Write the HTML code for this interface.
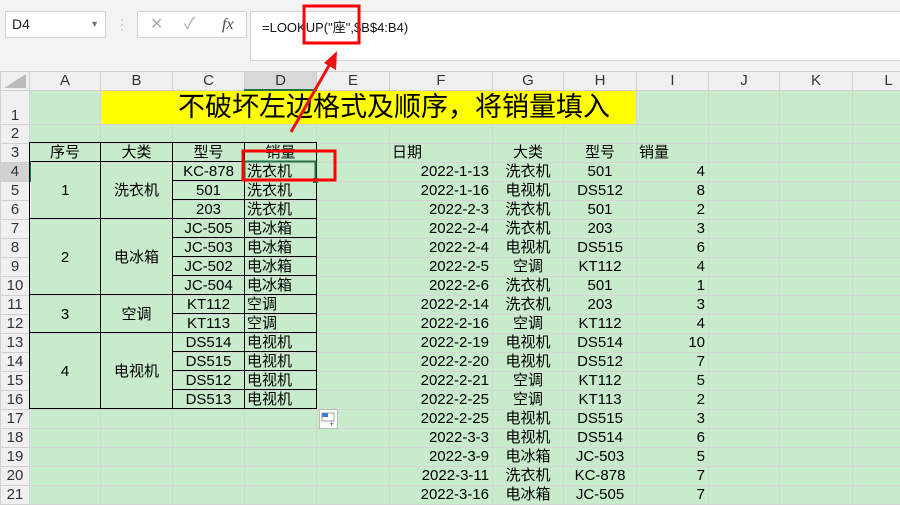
<!DOCTYPE html>
<html><head><meta charset="utf-8"><style>
*{margin:0;padding:0;box-sizing:border-box}
body{width:900px;height:496px;overflow:hidden;background:#f3f3f3;font-family:"Liberation Sans","Noto Sans CJK SC",sans-serif;position:relative;color:#000}
.abs{position:absolute}
table{position:absolute;left:0;top:71px;width:924px;border-collapse:collapse;table-layout:fixed;font-size:15px}
td{border:1px solid #d4d4d4;background:#c8ebcb;height:19px;padding:0 2px;white-space:nowrap;overflow:hidden;line-height:17px}
tr.h td{background:#f0f0f0;text-align:center;color:#333;height:18px;border-color:#d0d0d0}
td.r{background:#f0f0f0;text-align:center;color:#333;border-color:#d0d0d0;padding:0}
.c{text-align:center}.rt{text-align:right;padding-right:3px}
</style></head><body>
<div class="abs" style="left:5px;top:11px;width:101px;height:27px;background:#fff;border:1px solid #d4d4d4;font-size:14px;line-height:25px;padding-left:6px;color:#222">D4<span style="position:absolute;right:6px;top:0;font-size:9px;color:#777">▼</span></div>
<div class="abs" style="left:120px;top:17px;color:#aaa;font-size:12px;line-height:5px">·<br>·<br>·</div>
<div class="abs" style="left:137px;top:11px;width:110px;height:27px;background:#fff;border:1px solid #d4d4d4;color:#aaa;font-size:16px;line-height:25px">
<span class="abs" style="left:12px">✕</span><span class="abs" style="left:46px">✓</span><span class="abs" style="left:84px;color:#444;font-style:italic;font-family:'Liberation Serif',serif">fx</span></div>
<div class="abs" style="left:250px;top:11px;width:660px;height:50px;background:#fff;border:1px solid #d4d4d4;font-size:13px;padding:5px 0 0 11px;color:#111">=LOOKUP("座",$B$4:B4)</div>
<table>
<colgroup><col style="width:29px"><col style="width:71px"><col style="width:72px"><col style="width:72px"><col style="width:72px"><col style="width:73px"><col style="width:103px"><col style="width:71px"><col style="width:73px"><col style="width:72px"><col style="width:71px"><col style="width:73px"><col style="width:72px"></colgroup>
<tr class="h"><td></td><td>A</td><td>B</td><td>C</td><td style="background:#d8d8d8;border-bottom:2px solid #217346">D</td><td>E</td><td>F</td><td>G</td><td>H</td><td>I</td><td>J</td><td>K</td><td>L</td></tr>
<tr style="height:34px"><td class="r" style="vertical-align:bottom">1</td><td></td><td colspan="7" style="background:#ffff00;padding-left:77px;font-size:27px;line-height:32px;height:34px">不破坏左边格式及顺序，将销量填入</td><td></td><td></td><td></td><td></td></tr>
<tr><td class="r">2</td><td></td><td></td><td></td><td></td><td></td><td></td><td></td><td></td><td></td><td></td><td></td><td></td></tr>
<tr><td class="r">3</td><td class="c">序号</td><td class="c">大类</td><td class="c">型号</td><td class="c">销量</td><td></td><td>日期</td><td class="c">大类</td><td class="c">型号</td><td>销量</td><td></td><td></td><td></td></tr>
<tr><td class="r" style="background:#d2d2d2;border-right:2px solid #217346">4</td><td rowspan="3" class="c">1</td><td rowspan="3" class="c">洗衣机</td><td class="c">KC-878</td><td>洗衣机</td><td></td><td class="rt">2022-1-13</td><td class="c">洗衣机</td><td class="c">501</td><td class="rt">4</td><td></td><td></td><td></td></tr>
<tr><td class="r">5</td><td class="c">501</td><td>洗衣机</td><td></td><td class="rt">2022-1-16</td><td class="c">电视机</td><td class="c">DS512</td><td class="rt">8</td><td></td><td></td><td></td></tr>
<tr><td class="r">6</td><td class="c">203</td><td>洗衣机</td><td></td><td class="rt">2022-2-3</td><td class="c">洗衣机</td><td class="c">501</td><td class="rt">2</td><td></td><td></td><td></td></tr>
<tr><td class="r">7</td><td rowspan="4" class="c">2</td><td rowspan="4" class="c">电冰箱</td><td class="c">JC-505</td><td>电冰箱</td><td></td><td class="rt">2022-2-4</td><td class="c">洗衣机</td><td class="c">203</td><td class="rt">3</td><td></td><td></td><td></td></tr>
<tr><td class="r">8</td><td class="c">JC-503</td><td>电冰箱</td><td></td><td class="rt">2022-2-4</td><td class="c">电视机</td><td class="c">DS515</td><td class="rt">6</td><td></td><td></td><td></td></tr>
<tr><td class="r">9</td><td class="c">JC-502</td><td>电冰箱</td><td></td><td class="rt">2022-2-5</td><td class="c">空调</td><td class="c">KT112</td><td class="rt">4</td><td></td><td></td><td></td></tr>
<tr><td class="r">10</td><td class="c">JC-504</td><td>电冰箱</td><td></td><td class="rt">2022-2-6</td><td class="c">洗衣机</td><td class="c">501</td><td class="rt">1</td><td></td><td></td><td></td></tr>
<tr><td class="r">11</td><td rowspan="2" class="c">3</td><td rowspan="2" class="c">空调</td><td class="c">KT112</td><td>空调</td><td></td><td class="rt">2022-2-14</td><td class="c">洗衣机</td><td class="c">203</td><td class="rt">3</td><td></td><td></td><td></td></tr>
<tr><td class="r">12</td><td class="c">KT113</td><td>空调</td><td></td><td class="rt">2022-2-16</td><td class="c">空调</td><td class="c">KT112</td><td class="rt">4</td><td></td><td></td><td></td></tr>
<tr><td class="r">13</td><td rowspan="4" class="c">4</td><td rowspan="4" class="c">电视机</td><td class="c">DS514</td><td>电视机</td><td></td><td class="rt">2022-2-19</td><td class="c">电视机</td><td class="c">DS514</td><td class="rt">10</td><td></td><td></td><td></td></tr>
<tr><td class="r">14</td><td class="c">DS515</td><td>电视机</td><td></td><td class="rt">2022-2-20</td><td class="c">电视机</td><td class="c">DS512</td><td class="rt">7</td><td></td><td></td><td></td></tr>
<tr><td class="r">15</td><td class="c">DS512</td><td>电视机</td><td></td><td class="rt">2022-2-21</td><td class="c">空调</td><td class="c">KT112</td><td class="rt">5</td><td></td><td></td><td></td></tr>
<tr><td class="r">16</td><td class="c">DS513</td><td>电视机</td><td></td><td class="rt">2022-2-25</td><td class="c">空调</td><td class="c">KT113</td><td class="rt">2</td><td></td><td></td><td></td></tr>
<tr><td class="r">17</td><td></td><td></td><td></td><td></td><td></td><td class="rt">2022-2-25</td><td class="c">电视机</td><td class="c">DS515</td><td class="rt">3</td><td></td><td></td><td></td></tr>
<tr><td class="r">18</td><td></td><td></td><td></td><td></td><td></td><td class="rt">2022-3-3</td><td class="c">电视机</td><td class="c">DS514</td><td class="rt">6</td><td></td><td></td><td></td></tr>
<tr><td class="r">19</td><td></td><td></td><td></td><td></td><td></td><td class="rt">2022-3-9</td><td class="c">电冰箱</td><td class="c">JC-503</td><td class="rt">5</td><td></td><td></td><td></td></tr>
<tr><td class="r">20</td><td></td><td></td><td></td><td></td><td></td><td class="rt">2022-3-11</td><td class="c">洗衣机</td><td class="c">KC-878</td><td class="rt">7</td><td></td><td></td><td></td></tr>
<tr><td class="r">21</td><td></td><td></td><td></td><td></td><td></td><td class="rt">2022-3-16</td><td class="c">电冰箱</td><td class="c">JC-505</td><td class="rt">7</td><td></td><td></td><td></td></tr>
</table>
<svg class="abs" style="left:0;top:0" width="900" height="496">
<polygon points="4,88 26,88 26,74" fill="#bbb"/>
<g stroke="#000" stroke-width="1" shape-rendering="crispEdges">
<line x1="29.5" y1="142" x2="29.5" y2="408"/><line x1="100.5" y1="142" x2="100.5" y2="408"/><line x1="172.5" y1="142" x2="172.5" y2="408"/><line x1="244.5" y1="142" x2="244.5" y2="408"/><line x1="316.5" y1="142" x2="316.5" y2="408"/>
<line x1="29" y1="142.5" x2="317" y2="142.5"/><line x1="29" y1="161.5" x2="317" y2="161.5"/><line x1="29" y1="218.5" x2="317" y2="218.5"/><line x1="29" y1="294.5" x2="317" y2="294.5"/><line x1="29" y1="332.5" x2="317" y2="332.5"/><line x1="29" y1="408.5" x2="317" y2="408.5"/>
<line x1="172" y1="180.5" x2="317" y2="180.5"/><line x1="172" y1="199.5" x2="317" y2="199.5"/><line x1="172" y1="237.5" x2="317" y2="237.5"/><line x1="172" y1="256.5" x2="317" y2="256.5"/><line x1="172" y1="275.5" x2="317" y2="275.5"/><line x1="172" y1="313.5" x2="317" y2="313.5"/><line x1="172" y1="351.5" x2="317" y2="351.5"/><line x1="172" y1="370.5" x2="317" y2="370.5"/><line x1="172" y1="389.5" x2="317" y2="389.5"/>
</g>
<rect x="244.5" y="161.5" width="71" height="19" fill="none" stroke="#217346" stroke-width="2"/>
<rect x="313" y="178" width="5" height="5" fill="#217346"/>
<rect x="304" y="6" width="55" height="37" fill="none" stroke="#ff0000" stroke-width="3"/>
<rect x="243" y="151" width="92" height="29" fill="none" stroke="#ff0000" stroke-width="3"/>
<line x1="291" y1="132" x2="331" y2="62" stroke="#ee1111" stroke-width="3"/>
<polygon points="337,51 324,63 336,70" fill="#ee1111"/>
<rect x="319.5" y="409.5" width="18" height="19" fill="#fff" stroke="#bbb"/>
<rect x="322" y="413" width="6" height="4" fill="#3a78f2"/><rect x="322" y="413" width="12" height="8" fill="none" stroke="#888" stroke-width="0.8"/>
<text x="329" y="427" font-size="9" fill="#666" font-family="Liberation Sans">+</text>
</svg>
</body></html>
